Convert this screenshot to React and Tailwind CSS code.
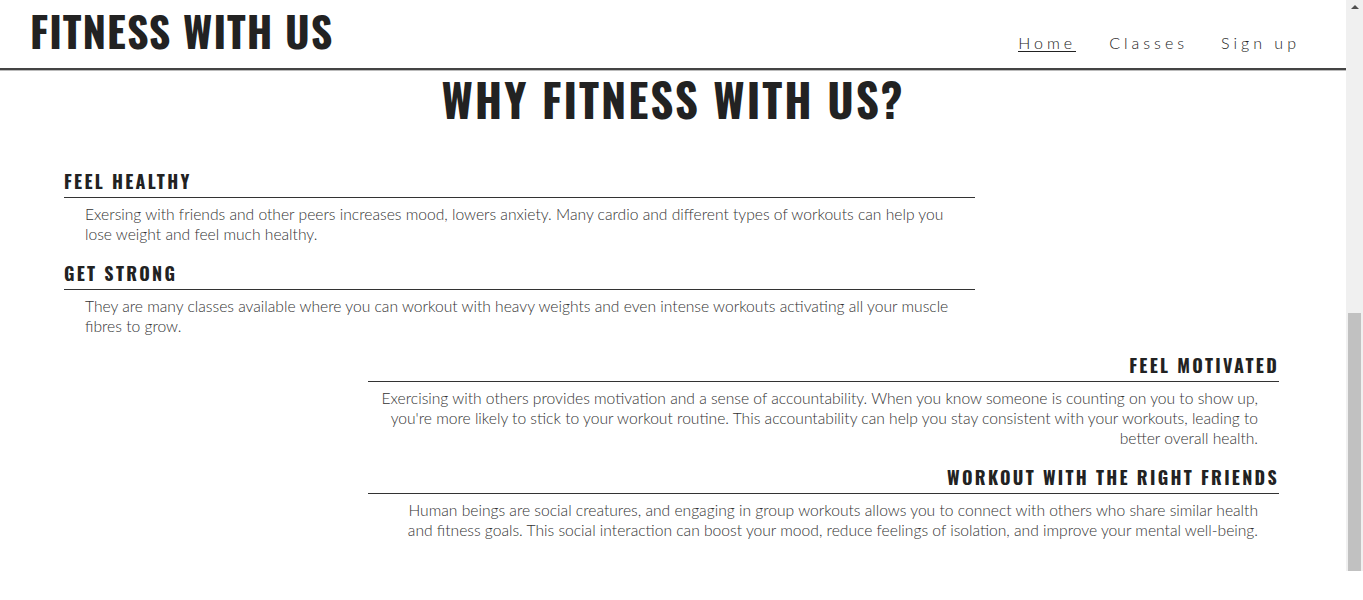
import React from "react";

const sections = [
  {
    title: "FEEL HEALTHY",
    text: "Exersing with friends and other peers increases mood, lowers anxiety. Many cardio and different types of workouts can help you lose weight and feel much healthy.",
    right: false,
  },
  {
    title: "GET STRONG",
    text: "They are many classes available where you can workout with heavy weights and even intense workouts activating all your muscle fibres to grow.",
    right: false,
  },
  {
    title: "FEEL MOTIVATED",
    text: "Exercising with others provides motivation and a sense of accountability. When you know someone is counting on you to show up, you're more likely to stick to your workout routine. This accountability can help you stay consistent with your workouts, leading to better overall health.",
    right: true,
  },
  {
    title: "WORKOUT WITH THE RIGHT FRIENDS",
    text: (
      <>
        Human beings are social creatures, and engaging in group workouts allows you to connect with others who share similar health
        <br />
        and fitness goals. This social interaction can boost your mood, reduce feelings of isolation, and improve your mental well-being.
      </>
    ),
    right: true,
  },
];

const heading = "font-['Oswald','Liberation_Sans_Narrow','DejaVu_Sans_Condensed',sans-serif] font-bold text-[#222]";

const Section = ({ title, text, right }) => (
  <div className={right ? "ml-[368px] w-[911px] text-right" : "ml-[64px] w-[911px]"}>
    <h2 className={`${heading} text-[18px] leading-[24px] tracking-[2.3px] border-b border-[#333] pb-[4px] pt-[4px]`}>
      {title}
    </h2>
    <p
      className={`${right ? "pl-[10px] pr-[21px]" : "pl-[21px] pr-[17px]"} pt-[6px] pb-[13px] font-['Lato',sans-serif] font-light text-[15.64px] leading-[20px] text-[#333]`}
    >
      {text}
    </p>
  </div>
);

const App = () => {
  return (
    <div className="flex w-[1363px] h-[600px] bg-white">
      <div className="w-[1346px] h-[571px]">
        <header className="h-[70px] flex justify-between border-b-2 border-[#444] shadow-[0_1px_0_#bbb]">
          <h1 className={`${heading} ml-[30px] mt-[4px] text-[42px] leading-[52px] tracking-[1px]`}>
            FITNESS WITH US
          </h1>
          <nav className="flex gap-[33px] mr-[46px] mt-[31px] font-['Lato',sans-serif] font-light text-[16px] tracking-[4px] text-[#222]">
            <a className="h-[21px] border-b border-[#222]">Home</a>
            <a>Classes</a>
            <a>Sign up</a>
          </nav>
        </header>
        <h1 className={`${heading} text-center mb-[37px] text-[45px] leading-[58px] tracking-[2px]`}>
          WHY FITNESS WITH US?
        </h1>
        {sections.map((s) => (
          <Section key={s.title} {...s} />
        ))}
      </div>
      <div className="relative w-[17px] h-[571px] bg-[#f0f0f0]">
        <div className="absolute left-[5px] top-[5px] w-0 h-0 border-l-[4px] border-r-[4px] border-b-[4px] border-l-transparent border-r-transparent border-b-[#505050]" />
        <div className="absolute left-[2px] right-[2px] top-[313px] bottom-0 bg-[#c1c1c1]" />
      </div>
    </div>
  );
};

export default App;
